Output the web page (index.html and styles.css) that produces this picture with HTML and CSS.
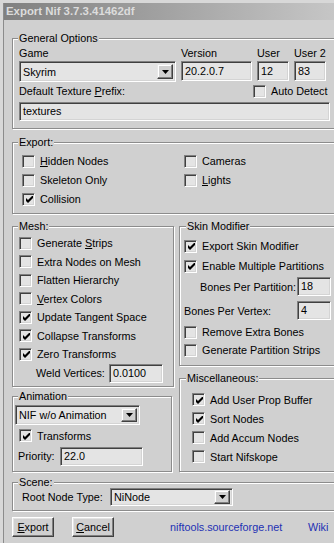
FILE: index.html
```html
<!DOCTYPE html>
<html>
<head>
	<meta charset="utf-8">
	<title>Export Nif</title>
	<link rel="stylesheet" href="styles.css">
</head>
<body>

<div class="window">
	<div class="caption">Export Nif 3.7.3.41462df</div>
	<div class="client">

		<div class="group general">
			<span class="group-title">General Options</span>
			<div class="general-grid">
				<span>Game</span>
				<span>Version</span>
				<span>User</span>
				<span>User 2</span>
				<div class="combo game"><span class="combo-text">Skyrim</span><span class="combo-btn"><svg width="7" height="4" viewBox="0 0 7 4"><path d="M0 0h7L3.5 4z"/></svg></span></div>
				<div class="edit">20.2.0.7</div>
				<div class="edit">12</div>
				<div class="edit">83</div>
			</div>
			<div class="prefix-row">
				<span class="prefix-label">Default Texture <u>P</u>refix:</span>
				<span class="check"><span class="box"></span>Auto Detect</span>
			</div>
			<div class="edit textures">textures</div>
		</div>

		<div class="group export">
			<span class="group-title">Export:</span>
			<div class="export-grid">
				<span class="check"><span class="box"></span><span><u>H</u>idden Nodes</span></span>
				<span class="check"><span class="box"></span>Cameras</span>
				<span class="check"><span class="box"></span>Skeleton Only</span>
				<span class="check"><span class="box"></span><span><u>L</u>ights</span></span>
				<span class="check"><span class="box on"><svg width="7" height="7" viewBox="0 0 7 7"><path d="M0 2l2 2 5-5v3l-5 5-2-2z"/></svg></span>Collision</span>
			</div>
		</div>

		<div class="columns">
			<div class="col-left">
				<div class="group mesh">
					<span class="group-title">Mesh:</span>
					<div class="mesh-rows">
						<span class="check"><span class="box"></span><span>Generate <u>S</u>trips</span></span>
						<span class="check"><span class="box"></span>Extra Nodes on Mesh</span>
						<span class="check"><span class="box"></span>Flatten Hierarchy</span>
						<span class="check"><span class="box"></span><span><u>V</u>ertex Colors</span></span>
						<span class="check"><span class="box on"><svg width="7" height="7" viewBox="0 0 7 7"><path d="M0 2l2 2 5-5v3l-5 5-2-2z"/></svg></span>Update Tangent Space</span>
						<span class="check"><span class="box on"><svg width="7" height="7" viewBox="0 0 7 7"><path d="M0 2l2 2 5-5v3l-5 5-2-2z"/></svg></span>Collapse Transforms</span>
						<span class="check"><span class="box on"><svg width="7" height="7" viewBox="0 0 7 7"><path d="M0 2l2 2 5-5v3l-5 5-2-2z"/></svg></span>Zero Transforms</span>
						<div class="weld-row">
							<span class="weld-label">Weld Vertices:</span>
							<div class="edit weld">0.0100</div>
						</div>
					</div>
				</div>

				<div class="group anim">
					<span class="group-title">Animation</span>
					<div class="combo anim-combo"><span class="combo-text">NIF w/o Animation</span><span class="combo-btn"><svg width="7" height="4" viewBox="0 0 7 4"><path d="M0 0h7L3.5 4z"/></svg></span></div>
					<div class="trans-row">
						<span class="check"><span class="box on"><svg width="7" height="7" viewBox="0 0 7 7"><path d="M0 2l2 2 5-5v3l-5 5-2-2z"/></svg></span>Transforms</span>
					</div>
					<div class="priority-row">
						<span class="priority-label">Priority:</span>
						<div class="edit priority">22.0</div>
					</div>
				</div>
			</div>

			<div class="col-right">
				<div class="group skin">
					<span class="group-title">Skin Modifier</span>
					<div class="skin-row r1"><span class="check"><span class="box on"><svg width="7" height="7" viewBox="0 0 7 7"><path d="M0 2l2 2 5-5v3l-5 5-2-2z"/></svg></span>Export Skin Modifier</span></div>
					<div class="skin-row r2"><span class="check"><span class="box on"><svg width="7" height="7" viewBox="0 0 7 7"><path d="M0 2l2 2 5-5v3l-5 5-2-2z"/></svg></span>Enable Multiple Partitions</span></div>
					<div class="skin-row r3"><span class="bpp-label">Bones Per Partition:</span><div class="edit bones">18</div></div>
					<div class="skin-row r4"><span class="bpv-label">Bones Per Vertex:</span><div class="edit bones">4</div></div>
					<div class="skin-row r5"><span class="check"><span class="box"></span>Remove Extra Bones</span></div>
					<div class="skin-row r6"><span class="check"><span class="box"></span>Generate Partition Strips</span></div>
				</div>

				<div class="group misc">
					<span class="group-title">Miscellaneous:</span>
					<div class="misc-rows">
						<span class="check"><span class="box on"><svg width="7" height="7" viewBox="0 0 7 7"><path d="M0 2l2 2 5-5v3l-5 5-2-2z"/></svg></span>Add User Prop Buffer</span>
						<span class="check"><span class="box on"><svg width="7" height="7" viewBox="0 0 7 7"><path d="M0 2l2 2 5-5v3l-5 5-2-2z"/></svg></span>Sort Nodes</span>
						<span class="check"><span class="box"></span>Add Accum Nodes</span>
						<span class="check"><span class="box"></span>Start Nifskope</span>
					</div>
				</div>
			</div>
		</div>

		<div class="group scene">
			<span class="group-title">Scene:</span>
			<div class="scene-row">
				<span class="root-label">Root Node Type:</span>
				<div class="combo root-combo"><span class="combo-text">NiNode</span><span class="combo-btn"><svg width="7" height="4" viewBox="0 0 7 4"><path d="M0 0h7L3.5 4z"/></svg></span></div>
			</div>
		</div>

		<div class="footer">
			<span class="button"><u>E</u>xport</span>
			<span class="button cancel"><u>C</u>ancel</span>
			<span class="link site">niftools.sourceforge.net</span>
			<span class="link">Wiki</span>
		</div>

	</div>
</div>

</body>
</html>
```

FILE: styles.css
```css
* {
	margin: 0;
	padding: 0;
	box-sizing: border-box;
}
body {
	background: #d8d8d8;
	font: 10.8px "Liberation Sans", Arial, sans-serif;
	color: #000;
	overflow: hidden;
}
u {
	text-decoration: underline;
	text-underline-offset: 1px;
}
.window {
	width: 331px;
	height: 540px;
	margin: 3px 0 0 3px;
	border-left: 1px solid #8c8c8c;
	background: #d0d0d0;
	overflow: hidden;
}
.caption {
	height: 17px;
	line-height: 17px;
	padding-left: 2px;
	background: linear-gradient(to right, #808080, #c6c6c6);
	color: #dcdcdc;
	font-weight: bold;
	font-size: 11.4px;
}
.client {
	width: 350px;
	padding: 18px 0 0 8px;
}

/* group boxes */
.group {
	border: 1px solid #8c8c8c;
	box-shadow: inset 1px 1px 0 #fff, 1px 1px 0 #fff;
	padding-left: 6px;
}
.group-title {
	display: block;
	width: max-content;
	height: 14px;
	line-height: 14px;
	margin: -8px 0 0 -1px;
	padding: 0 1px;
	background: #d0d0d0;
}

/* controls */
.box {
	display: inline-flex;
	align-items: center;
	justify-content: center;
	flex: none;
	width: 13px;
	height: 13px;
	border: 1px solid;
	border-color: #808080 #fff #fff #808080;
	box-shadow: inset 1px 1px 0 #404040, inset -1px -1px 0 #d4d4d4;
	background: #e4e4e4;
}
.box svg {
	display: block;
	margin: 1px 0 0 1px;
}
.check {
	display: flex;
	align-items: center;
	gap: 5px;
}
.edit {
	height: 20px;
	line-height: 18px;
	padding-left: 3px;
	border: 1px solid;
	border-color: #808080 #fff #fff #808080;
	box-shadow: inset 1px 1px 0 #404040, inset -1px -1px 0 #d4d4d4;
	background: #e4e4e4;
	white-space: nowrap;
	overflow: hidden;
}
.combo {
	display: flex;
	align-items: stretch;
	height: 21px;
	padding: 2px;
	border: 1px solid;
	border-color: #808080 #fff #fff #808080;
	box-shadow: inset 1px 1px 0 #404040, inset -1px -1px 0 #d4d4d4;
	background: #e4e4e4;
}
.combo-text {
	flex: 1;
	display: flex;
	align-items: center;
	padding-left: 1px;
}
.combo-btn {
	display: flex;
	align-items: center;
	justify-content: center;
	width: 16px;
	border: 1px solid;
	border-color: #e8e8e8 #404040 #404040 #e8e8e8;
	box-shadow: inset -1px -1px 0 #808080, inset 1px 1px 0 #fff;
	background: #d0d0d0;
}
.combo-btn svg {
	display: block;
}

/* general options */
.general {
	padding-bottom: 7px;
}
.general-grid {
	display: grid;
	grid-template-columns: 157px 71px 32px 32px;
	grid-template-rows: 15px 21px;
	column-gap: 5px;
	row-gap: 1px;
	align-items: center;
}
.general-grid .edit {
	align-self: start;
}
.prefix-row {
	display: flex;
	align-items: center;
	height: 18px;
}
.prefix-label {
	width: 234px;
}
.textures {
	width: 311px;
	height: 19px;
	line-height: 17px;
	margin-top: 2px;
}

/* export */
.export {
	margin-top: 13px;
	padding-bottom: 5px;
}
.export-grid {
	display: grid;
	grid-template-columns: 162px auto;
	grid-auto-rows: 18px;
	row-gap: 1px;
	margin: 3px 0 0 3px;
}

/* mesh / skin */
.columns {
	display: flex;
	gap: 5px;
	margin-top: 12px;
}
.col-left {
	width: 162px;
	flex: none;
}
.col-right {
	flex: 1;
}
.mesh {
	padding-bottom: 3.5px;
}
.mesh-rows {
	display: grid;
	grid-auto-rows: 18.5px;
	margin-top: 1px;
}
.weld-row {
	display: flex;
	align-items: center;
	height: 19px;
	padding-left: 17px;
}
.weld-label {
	width: 73px;
}
.weld {
	width: 54px;
	height: 19px;
	line-height: 17px;
}
.anim {
	width: 160px;
	margin-top: 9px;
	padding-bottom: 5px;
}
.anim-combo {
	width: 125px;
	height: 20px;
	margin: 2px 0 0 -4px;
}
.trans-row {
	display: flex;
	align-items: center;
	height: 20px;
	margin-top: 1px;
}
.priority-row {
	display: flex;
	align-items: center;
	height: 19px;
	margin: 1px 0 0 -1px;
}
.priority-label {
	width: 42px;
}
.priority {
	width: 83px;
	height: 19px;
	line-height: 17px;
}

.skin {
	padding: 0 0 6px 4px;
}
.skin .group-title {
	margin-left: 2px;
}
.skin-row {
	display: flex;
	align-items: center;
}
.r1 {
	height: 20px;
	margin-top: 3px;
}
.r2 {
	height: 20px;
}
.r3 {
	height: 19px;
	margin-top: 1px;
	padding-left: 16px;
}
.r4 {
	height: 19px;
	margin-top: 5px;
}
.r5 {
	height: 18px;
	margin-top: 3px;
}
.r6 {
	height: 18px;
}
.bpp-label {
	width: 97px;
}
.bpv-label {
	width: 113px;
}
.bones {
	width: 34px;
	height: 19px;
	line-height: 17px;
}

.misc {
	margin-top: 12px;
	padding: 0 0 5px 12px;
}
.misc .group-title {
	margin-left: -6px;
}
.misc-rows {
	display: grid;
	grid-auto-rows: 19px;
	margin-top: 5px;
}

/* scene */
.scene {
	margin-top: 10px;
	padding: 0 0 3.5px 9px;
}
.scene .group-title {
	margin: -8px 0 -2px -4px;
}
.scene-row {
	display: flex;
	align-items: center;
	height: 19px;
}
.root-label {
	width: 88px;
}
.root-combo {
	width: 123px;
	height: 18px;
	padding: 1px 2px;
}

/* footer */
.footer {
	display: flex;
	align-items: center;
	margin-top: 6px;
}
.button {
	width: 42px;
	height: 20px;
	line-height: 18px;
	text-align: center;
	border: 1px solid;
	border-color: #fff #404040 #404040 #fff;
	box-shadow: inset -1px -1px 0 #808080, inset 1px 1px 0 #e4e4e4;
	background: #d0d0d0;
}
.cancel {
	margin-left: 18px;
}
.link {
	color: #1e30b4;
}
.site {
	width: 138px;
	margin-left: 56px;
}
```
